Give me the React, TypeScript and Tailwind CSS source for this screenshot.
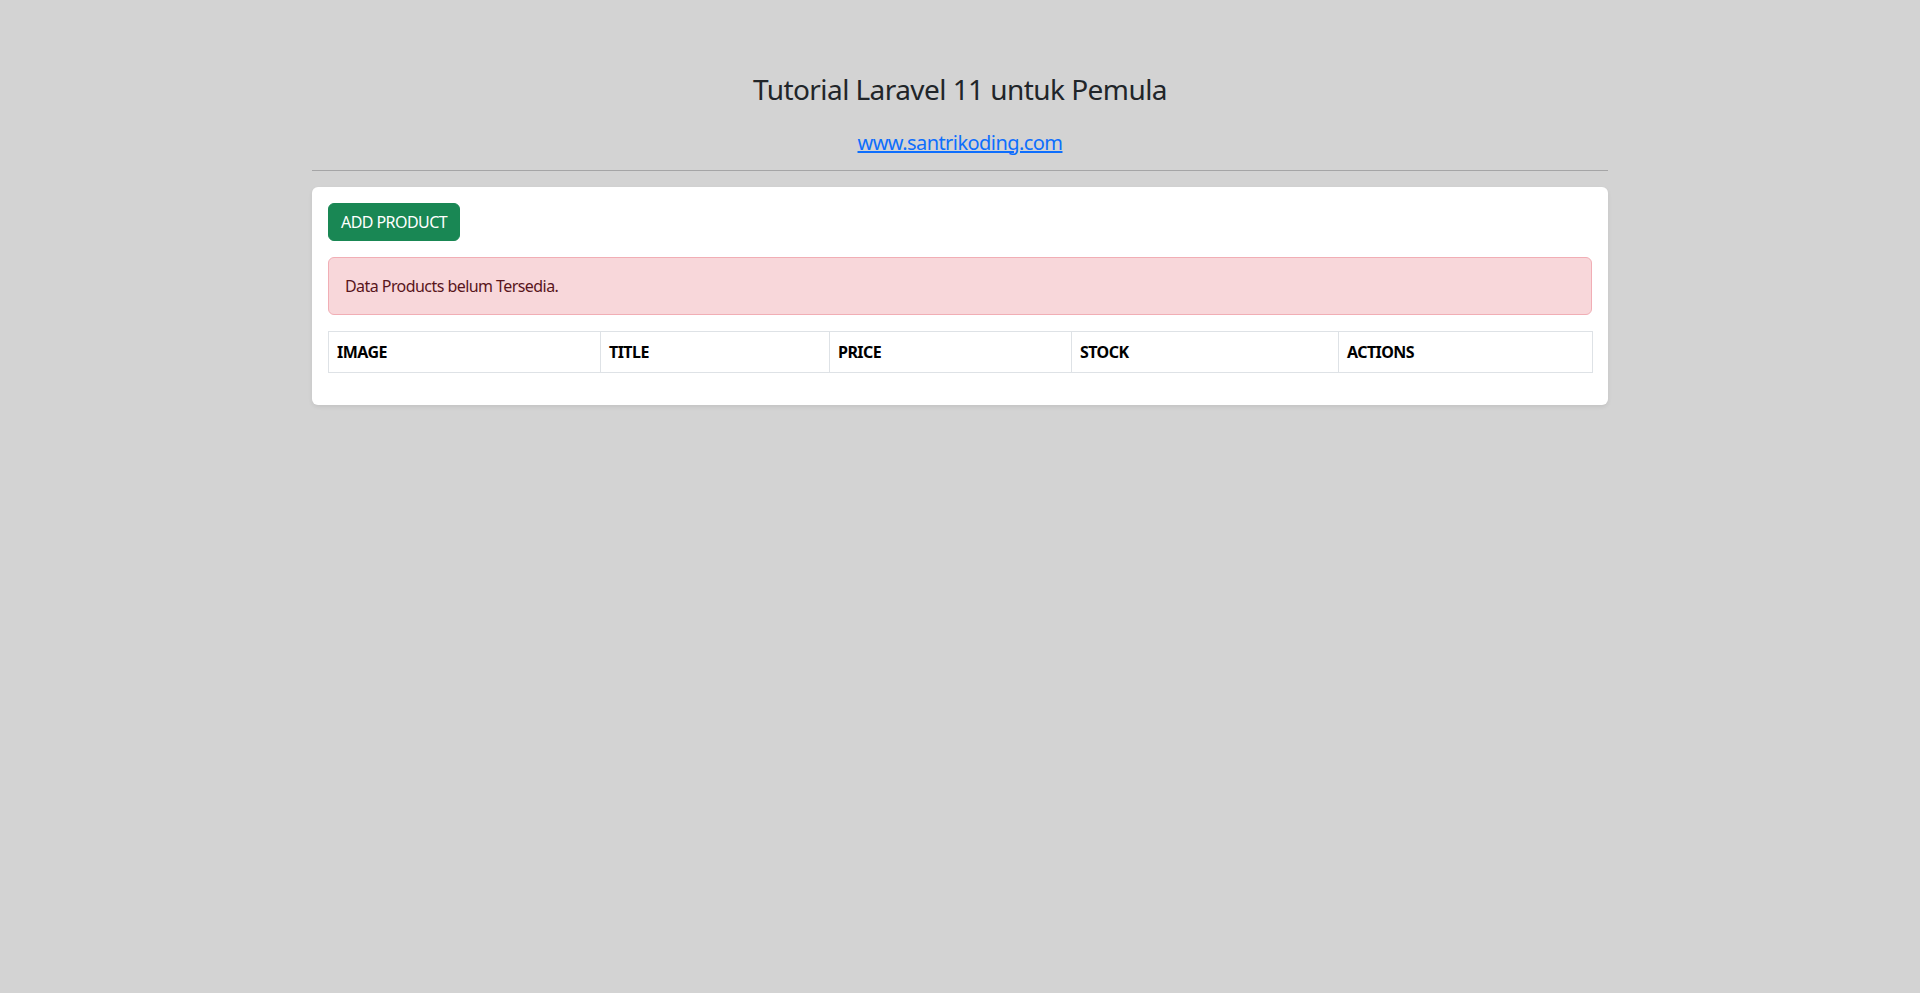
export default function App() {
  const cols = [
    { label: "IMAGE", w: "w-[272px]" },
    { label: "TITLE", w: "w-[229px]" },
    { label: "PRICE", w: "w-[242px]" },
    { label: "STOCK", w: "w-[267px]" },
    { label: "ACTIONS", w: "w-[254px]" },
  ];
  return (
    <div className="min-h-[993px] bg-[#d3d3d3] text-[#212529] font-['Noto_Sans',sans-serif] text-base tracking-[-0.035em]">
      <div className="mx-auto w-[1320px] px-3 pt-[73px]">
        <h3 className="text-center text-[28px] leading-[1.2] font-normal mb-6">
          Tutorial Laravel 11 untuk Pemula
        </h3>
        <h5 className="text-center text-[20px] leading-[1.2] font-normal">
          <a href="#" className="text-[#0d6efd] underline">
            www.santrikoding.com
          </a>
        </h5>
        <hr className="mt-[15px] mb-4 border-t border-[#a5a5a6]" />
        <div className="bg-white rounded-md shadow-[0_2px_4px_rgba(0,0,0,0.075)] p-4">
          <button className="bg-[#198754] text-white border border-[#198754] rounded-md px-3 py-1.5 leading-6 text-base mb-4">
            ADD PRODUCT
          </button>
          <div className="bg-[#f8d7da] border border-[#f1aeb5] text-[#58151c] rounded-md p-4 leading-6 mb-4">
            Data Products belum Tersedia.
          </div>
          <table className="w-full border-collapse table-fixed mb-4">
            <thead>
              <tr>
                {cols.map((c) => (
                  <th
                    key={c.label}
                    className={`${c.w} border border-[#dee2e6] p-2 text-left font-bold leading-6 text-black`}
                  >
                    {c.label}
                  </th>
                ))}
              </tr>
            </thead>
          </table>
        </div>
      </div>
    </div>
  );
}
